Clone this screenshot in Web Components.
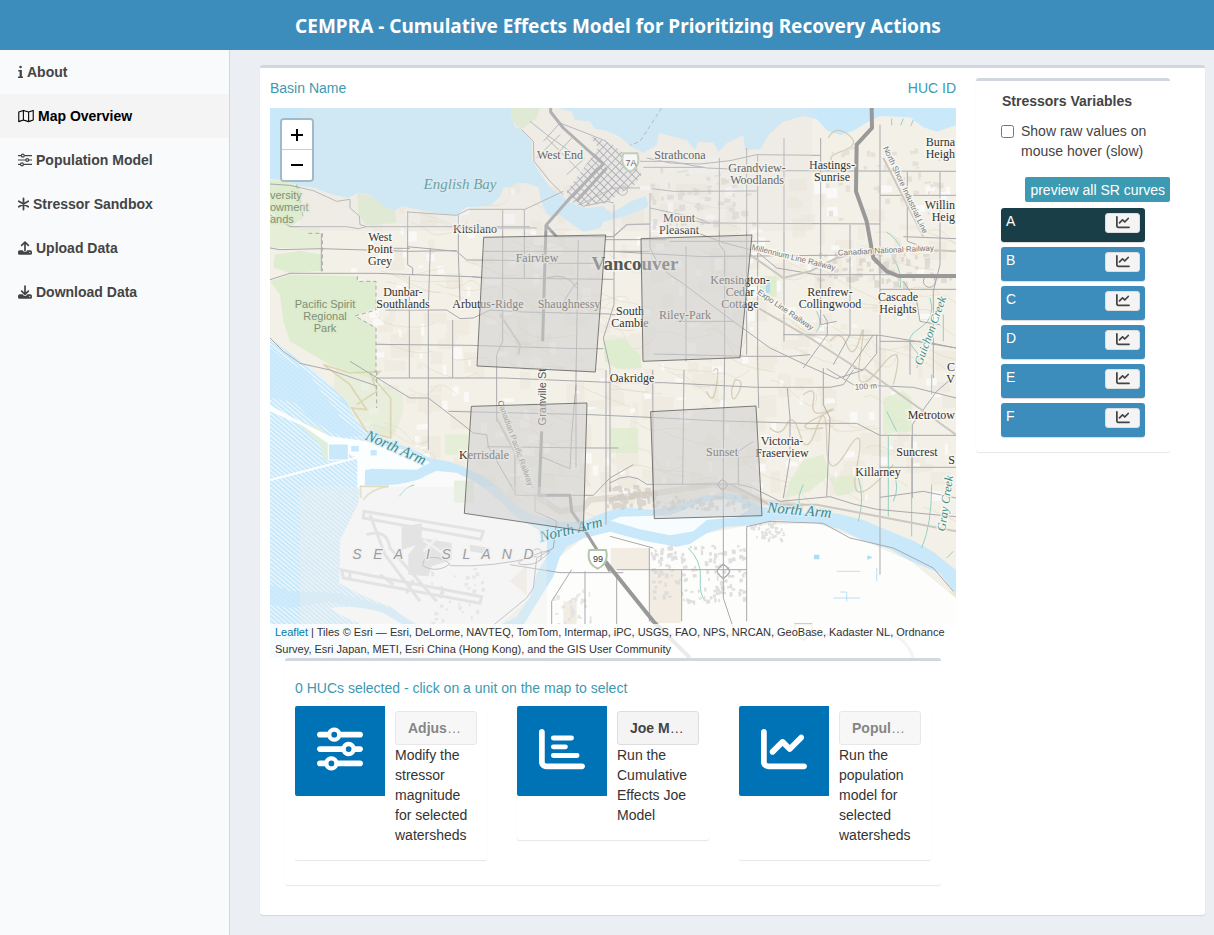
<!DOCTYPE html>
<html lang="en">
<head>
<meta charset="utf-8">
<meta name="viewport" content="width=device-width, initial-scale=1">
<title>CEMPRA</title>
<style>
  body { margin: 0; font: 14px/20px "Liberation Sans", Arial, sans-serif; color: #333; background: #ebeef3; }
</style>
</head>
<body>
<cem-app>
  <cem-nav slot="nav">
    <cem-nav-item icon="info">About</cem-nav-item>
    <cem-nav-item icon="map" active>Map Overview</cem-nav-item>
    <cem-nav-item icon="slidersThin">Population Model</cem-nav-item>
    <cem-nav-item icon="asterisk">Stressor Sandbox</cem-nav-item>
    <cem-nav-item icon="upload">Upload Data</cem-nav-item>
    <cem-nav-item icon="download">Download Data</cem-nav-item>
  </cem-nav>
  <cem-overview>
    <cem-map slot="map"></cem-map>
    <cem-actions slot="actions">
      <cem-action icon="sliders" name="Adjus" disabled>Modify the stressor magnitude for selected watersheds</cem-action>
      <cem-action icon="bars" name="Joe M">Run the Cumulative Effects Joe Model</cem-action>
      <cem-action icon="line" name="Popul" disabled>Run the population model for selected watersheds</cem-action>
    </cem-actions>
    <cem-stressors slot="side">
      <cem-stressor active>A</cem-stressor>
      <cem-stressor>B</cem-stressor>
      <cem-stressor>C</cem-stressor>
      <cem-stressor>D</cem-stressor>
      <cem-stressor>E</cem-stressor>
      <cem-stressor>F</cem-stressor>
    </cem-stressors>
  </cem-overview>
</cem-app>

<script>
const SLIDERS = 'M0 416c0 17.7 14.3 32 32 32l54.7 0c12.3 28.3 40.5 48 73.3 48s61-19.7 73.3-48L480 448c17.7 0 32-14.3 32-32s-14.3-32-32-32l-246.7 0c-12.3-28.3-40.5-48-73.3-48s-61 19.7-73.3 48L32 384c-17.7 0-32 14.3-32 32zm128 0a32 32 0 1 1 64 0 32 32 0 1 1 -64 0zM320 256a32 32 0 1 1 64 0 32 32 0 1 1 -64 0zm32-80c-32.8 0-61 19.7-73.3 48L32 224c-17.7 0-32 14.3-32 32s14.3 32 32 32l246.7 0c12.3 28.3 40.5 48 73.3 48s61-19.7 73.3-48l54.7 0c17.7 0 32-14.3 32-32s-14.3-32-32-32l-54.7 0c-12.3-28.3-40.5-48-73.3-48zM192 128a32 32 0 1 1 0-64 32 32 0 1 1 0 64zm73.3-64C253 35.7 224.8 16 192 16s-61 19.7-73.3 48L32 64C14.3 64 0 78.3 0 96s14.3 32 32 32l86.7 0c12.3 28.3 40.5 48 73.3 48s61-19.7 73.3-48L480 128c17.7 0 32-14.3 32-32s-14.3-32-32-32L265.3 64z';
const AXIS = 'M64 64c0-17.7-14.3-32-32-32S0 46.3 0 64V400c0 44.2 35.8 80 80 80H480c17.7 0 32-14.3 32-32s-14.3-32-32-32H80c-8.8 0-16-7.2-16-16V64z';
const LINE = AXIS + 'm406.6 86.6c12.5-12.5 12.5-32.8 0-45.3s-32.8-12.5-45.3 0L320 210.7l-57.4-57.4c-12.5-12.5-32.8-12.5-45.3 0l-112 112c-12.5 12.5-12.5 32.8 0 45.3s32.8 12.5 45.3 0L240 221.3l57.4 57.4c12.5 12.5 32.8 12.5 45.3 0l128-128z';
const TRAY = '<path fill-rule="evenodd" d="M64 340h110a84 84 0 0 0 164 0h110a64 64 0 0 1 64 56v48a56 56 0 0 1-56 56H56a56 56 0 0 1-56-56v-48a64 64 0 0 1 64-56zM432 398a24 24 0 1 0 .1 0z"/>';
const ICONS = {
  info: [5, '20 20 200 490', '<path d="M70 64a52 52 0 1 1 104 0 52 52 0 1 1-104 0M30 180h145v260h45v60H20v-60h65V240H30z"/>'],
  map: [16, '0 0 576 512', '<g fill="none" stroke="currentColor" stroke-width="40" stroke-linejoin="round"><path d="M24 112l168-60 192 60 168-60v350l-168 60-192-60-168 60zM192 52v350M384 112v350"/></g>'],
  slidersThin: [14, '0 0 512 512', '<g fill="none" stroke="currentColor" stroke-width="44"><path d="M0 96h120M232 96h280M0 256h280M392 256h120M0 416h90M202 416h310"/><circle cx="176" cy="96" r="52"/><circle cx="336" cy="256" r="52"/><circle cx="146" cy="416" r="52"/></g>'],
  asterisk: [11, '16 20 384 472', '<path fill="none" stroke="currentColor" stroke-width="62" stroke-linecap="round" d="M208 64v384M42 160l332 192M374 160L42 352"/>'],
  upload: [14, '0 0 512 512', TRAY + '<path fill="none" stroke="currentColor" stroke-width="62" stroke-linecap="round" stroke-linejoin="round" d="M256 350V50M134 160L256 42l122 118"/>'],
  download: [14, '0 0 512 512', TRAY + '<path fill="none" stroke="currentColor" stroke-width="62" stroke-linecap="round" stroke-linejoin="round" d="M256 40v300M134 226l122 118 122-118"/>'],
  sliders: [46, '0 0 512 512', `<path d="${SLIDERS}"/>`],
  bars: [46, '0 0 512 512', `<path d="${AXIS}"/><path fill="none" stroke="currentColor" stroke-width="54" stroke-linecap="round" d="M160 134h202M160 232h134M160 328h264"/>`],
  line: [46, '0 0 512 512', `<path d="${LINE}"/>`],
  lineSmall: [14, '0 0 512 512', `<path d="${LINE}"/>`]
};
const icon = name => {
  const [w, box, body] = ICONS[name];
  return `<svg class="icon" width="${w}" height="${w > 20 ? w : 14}" viewBox="${box}" fill="currentColor" aria-hidden="true">${body}</svg>`;
};
const define = (name, markup) => customElements.define(name, class extends HTMLElement {
  constructor() {
    super();
    this.attachShadow({ mode: 'open' });
  }
  connectedCallback() {
    this.shadowRoot.innerHTML = typeof markup === 'function' ? markup(this) : markup;
  }
});

define('cem-app', `
<style>
  :host { display: grid; grid-template: 50px 1fr / 230px minmax(0, 1fr); min-height: 100vh; }
  header { grid-column: 1 / -1; background: #3c8dbc; color: #fff; display: flex; align-items: center; justify-content: center; }
  h1 { margin: 0; padding: 2px 0 0 22px; font: bold 19px/28px "Noto Sans", "Open Sans", sans-serif; }
  main { padding: 15px 9px 20px 30px; }
</style>
<header><h1>CEMPRA - Cumulative Effects Model for Prioritizing Recovery Actions</h1></header>
<slot name="nav"></slot>
<main><slot></slot></main>`);

define('cem-nav', `
<style>
  :host { display: block; background: #f9fafc; border-right: 1px solid #d2d6de; }
</style>
<nav><slot></slot></nav>`);

define('cem-nav-item', el => `
<style>
  :host { display: block; }
  a { display: flex; align-items: center; gap: 4px; padding: 12px 18px; color: #444; font-weight: bold; text-decoration: none; }
  :host([active]) a { background: #f4f4f5; color: #000; }
  .icon { flex: none; }
</style>
<a href="#">${icon(el.getAttribute('icon'))}<span><slot></slot></span></a>`);

define('cem-overview', `
<style>
  :host { display: grid; grid-template-columns: minmax(0, 1fr) 194px; gap: 20px; align-items: start; background: #fff;
    border-top: 3px solid #d2d6de; border-radius: 3px; box-shadow: 0 1px 1px rgba(0,0,0,.1); padding: 10px 35px 30px 10px; }
  .head { display: flex; justify-content: space-between; color: #3c9ab2; margin-bottom: 10px; }
</style>
<section>
  <div class="head"><span>Basin Name</span><span>HUC ID</span></div>
  <slot name="map"></slot>
  <slot name="actions"></slot>
</section>
<slot name="side"></slot>`);

define('cem-actions', `
<style>
  :host { display: block; margin: 0 15px; border-top: 3px solid #d2d6de; border-radius: 3px; box-shadow: 0 1px 1px rgba(0,0,0,.1); padding: 17px 10px 25px; background: #fff; }
  p { margin: 0 0 8px; color: #3c9ab2; }
  .row { display: grid; grid-template-columns: repeat(3, minmax(0, 1fr)); gap: 30px; align-items: start; }
</style>
<p>0 HUCs selected - click on a unit on the map to select</p>
<div class="row"><slot></slot></div>`);

define('cem-action', el => `
<style>
  :host { display: flex; border-radius: 2px; box-shadow: 0 1px 1px rgba(0,0,0,.1); background: #fff; }
  .tile { flex: none; width: 90px; height: 90px; background: #0073b7; color: #fff; border-radius: 2px 0 0 2px; display: flex; align-items: center; justify-content: center; padding-bottom: 4px; box-sizing: border-box; }
  .body { flex: 1; min-width: 0; padding: 5px 10px; }
  button { display: block; box-sizing: border-box; width: 100%; height: 34px; max-width: 82px; padding: 0 12px; text-align: left; font: inherit; color: #444; background: #f4f4f4; border: 1px solid #ddd; border-radius: 3px; white-space: nowrap; }
  button[disabled] { opacity: .65; }
  p { margin: 0 0 10px; }
</style>
<div class="tile">${icon(el.getAttribute('icon'))}</div>
<div class="body">
  <button type="button" ${el.hasAttribute('disabled') ? 'disabled' : ''}><b>${el.getAttribute('name')}</b>…</button>
  <p><slot></slot></p>
</div>`);

define('cem-stressors', `
<style>
  :host { display: block; border-top: 3px solid #d2d6de; border-radius: 3px; box-shadow: 0 1px 1px rgba(0,0,0,.1); padding: 10px 0 15px 25px; }
  h2 { margin: 0 0 10px; font: bold 14px/20px "Liberation Sans", Arial, sans-serif; padding-left: 1px; color: #444; }
  label { display: flex; gap: 7px; align-items: flex-start; color: #444; }
  input { margin: 4px 0 0; width: 13px; height: 13px; flex: none; }
  .preview { display: block; margin: 16px 0 6px auto; padding: 0 5px; height: 25px; border: 0; border-radius: 2px; background: #3c9ab2; color: #fff; font: inherit; white-space: nowrap; }
  .list { display: grid; gap: 5px; margin-right: 25px; }
</style>
<h2>Stressors Variables</h2>
<label><input type="checkbox"><span>Show raw values on mouse hover (slow)</span></label>
<button class="preview" type="button">preview all SR curves</button>
<div class="list"><slot></slot></div>`);

define('cem-stressor', `
<style>
  :host { display: flex; justify-content: space-between; align-items: flex-start; box-sizing: border-box; height: 34px; padding: 5px; background: #3c8dbc; color: #fff; border-radius: 3px; box-shadow: 0 1px 1px rgba(0,0,0,.15); }
  :host([active]) { background: #193e47; }
  span { line-height: 16px; }
  button { display: flex; justify-content: center; width: 35px; height: 20px; padding: 1px 0 0; border: 1px solid #ddd; border-radius: 3px; background: #f4f4f4; color: #444; box-sizing: border-box; }
</style>
<span><slot></slot></span><button type="button" aria-label="Plot">${icon('lineSmall')}</button>`);

/* ---- Map artwork. Geometry is drawn at three units per pixel. ---- */
const seeded = s => () => (s = (s * 16807) % 2147483647) / 2147483647;
const rnd = seeded(77);
const scatter = (n, x, y, w, h, min, max, fill, op) => {
  let d = '';
  for (let i = 0; i < n; i++) {
    const a = Math.round(x + rnd() * w), b = Math.round(y + rnd() * h), c = Math.round(min + rnd() * (max - min)), e = Math.round(min + rnd() * (max - min));
    d += `M${a} ${b}l${c} ${Math.round(rnd() * 6 - 3)} 1 ${e} -${c} 2z`;
  }
  return `<path d="${d}" fill="${fill}" opacity="${op}"/>`;
};
const squiggles = (n, x, y, w, h) => {
  let d = '';
  for (let i = 0; i < n; i++) {
    d += `M${Math.round(x + rnd() * w)} ${Math.round(y + rnd() * h)}q${Math.round(rnd() * 60)} ${Math.round(rnd() * 60 - 20)} ${Math.round(60 + rnd() * 30)} ${Math.round(rnd() * 50)}t${Math.round(40 + rnd() * 60)} ${Math.round(rnd() * 60 - 20)}`;
  }
  return `<path d="${d}" fill="none" stroke="#ddd3bd" stroke-width="2" opacity=".7"/>`;
};
const label = (x, y, lines, cls = '') => lines.map((t, i) => `<text class="${cls}" x="${x}" y="${y + i * 12}">${t}</text>`).join('');

const water = `
<g transform="translate(0 -24)">
  <path d="M0 24H725L722 45 735 80 760 95 785 125 786 180 810 220 840 262 872 285 905 310 950 325 1000 318 1020 340 1050 325 1080 305 1128 288 1135 320 1060 350 1000 365 990 385 940 395 900 368 870 345 845 352 828 338 812 300 806 262 770 250 742 248 720 262 700 262 690 290 660 318 590 322 560 346 520 342 440 328 395 318 375 332 340 318 300 285 262 278 235 294 190 284 130 262 90 258 45 242 0 236z"/>
  <path d="M865 24L905 35 915 60 960 64 975 86 1010 92 1050 110 1085 140 1120 158 1160 135 1168 98 1210 110 1250 120 1275 150 1285 125 1330 128 1345 155 1370 130 1420 105 1425 150 1470 148 1500 100 1540 65 1600 48 1640 58 1672 92 1712 105 1750 92 1790 68 1830 48 1920 52 1960 82 2000 95 2058 76V24z"/>
</g>
<g transform="translate(0 786)">
  <path d="M0-95L60-50 130 0 180 45 230 95 245 130 285 180 350 210 420 235 480 265 540 275 580 290 640 318 690 355 735 405 780 432 860 455 940 455 1000 428 1060 412 1150 420 1220 405 1300 378 1370 370 1415 375 1470 408 1560 430 1700 430 1780 450 1850 480 1930 512 1990 545 2058 600V672L2010 610 1920 572 1860 538 1780 512 1710 478 1640 460 1520 450 1440 466 1370 470 1310 490 1260 522 1220 530 1120 512 1020 485 940 505 890 530 870 560 850 620 800 700 760 765H690L740 740 780 680 800 610 830 560 832 495 780 465 730 435 690 392 650 360 610 332 560 308 500 302 440 330 340 345 285 330 270 350 265 400 210 510 208 640 280 680 360 710 440 765V864H0z"/>
</g>`;

const geometry = `
<rect width="2058" height="1650" fill="#f3f0e7"/>
${scatter(230, 300, 210, 1720, 950, 12, 70, '#ece6d9', '.5')}
${scatter(210, 200, 220, 1830, 950, 6, 36, '#fbfaf8', '.9')}
${squiggles(120, 280, 230, 1700, 1000)}
<g fill="#deeccf">
  <path d="M0 216L45 220 90 236 100 330 60 356 0 310z"/>
  <path d="M0 330L60 356H150V420H0z" opacity=".6"/>
  <path d="M15 440L90 428 154 440V488L60 496 10 478z"/>
  <path d="M0 520L60 500 262 505 262 520 318 520V600L255 624 318 658 318 790 300 810 180 770 60 700 40 640 30 560z"/>
  <path d="M262 256L300 264 375 308 380 345 290 352 265 320zM725 0H810L800 30 750 68 722 30z"/>
  <path d="M1000 700L1060 690 1110 740 1115 780 1040 782 1005 760zM1470 505h50v60l-50 10z"/>
  <path d="M1840 870L1900 850 1925 870V970L1840 978zM1560 1120L1600 1055 1660 1040 1680 1100 1620 1150 1545 1170zM1680 1110L1750 1100 1765 1150 1700 1165zM1020 960h85v75h-85z" opacity=".8"/>
  <path d="M525 980h70v60h-70z" opacity=".7"/>
  <path d="M1240 1480h95v42h-95zM1020 1590h60v60h-60zM1130 1600h70v50h-70zM2020 1450h38v55z" opacity=".8"/>
  <path d="M200 770L300 800 400 860 400 910 370 990 290 960 240 900 190 840z" opacity=".5"/>
</g>
<path d="M0 1250L90 1180 270 1136 290 1120 500 1090 560 1094 650 1146 730 1221 830 1280 830 1346 780 1470 690 1551 440 1551 360 1496 208 1430z" fill="#fafafa"/>
<path d="M552 1118h60v66h-60z" fill="#e6f0dd"/>
<path d="M870 1346L940 1290 1020 1270 1220 1316 1310 1276 1440 1252 1640 1246 1780 1298 1920 1358 2058 1470V1650H700L800 1486z" fill="#fdfdfc"/>
<path d="M1022 1320L1138 1320V1384H1022zM1138 1385h95v160h-95zM880 1480h40v70h-40zM720 1420l50-50v90z" fill="#f2ece3"/>
<g fill="#c9e9fb">${water}</g>
<path d="M0 691L60 736 130 786 180 831 245 916 285 966 350 996 290 1030 270 1136 265 1186 210 1296 208 1426 280 1466 360 1496 440 1551V1650H0z" fill="url(#hatch)"/>
<path d="M0 720L50 760 110 790 160 860 210 920 130 910 60 880 0 870zM70 880l130 40 80 60-60 10-90-50z" fill="#c9e9fb" opacity=".8"/>
<path d="M0 1430L60 1450 200 1455 280 1476 360 1500 440 1551 400 1551 300 1510 180 1480 60 1500 0 1490z" fill="#c9e9fb" opacity=".8"/>
<path d="M70 940L140 955 185 990 180 1050 160 1060 150 1010 110 970z" fill="#e0efd6" opacity=".8"/>
<g fill="#fff">
  <path d="M0 892L60 925 180 985 290 1000 420 1030 480 1064 440 1085 300 1082 272 1150 262 1140 262 1050 180 1010 100 955 0 910z" opacity=".92"/>
</g>
<path d="M0 1116L265 1048" stroke="#fff" stroke-width="6"/>
<g fill="#fff">
  <path d="M1050 1226L1200 1222 1290 1186 1360 1172 1420 1186 1436 1206 1400 1228 1310 1236 1270 1270 1200 1282 1110 1264 1022 1238z" opacity=".85"/>
</g>
<path d="M175 1008h60v48h-60zM242 1012h26v20h-26zM300 1024h22v20h-22z" fill="#c9e9fb" stroke="#fff" stroke-width="3"/>
<path d="M285 1086q60-10 90 10l90 10q-40 20-120 26l-60 0z" fill="#c9e9fb"/>
<path d="M180 1500q80-10 160 15l60 36H280q-60-20-100-50z" fill="#fbfcf8"/>
<g fill="none" stroke="#d6d1a8" stroke-width="5" opacity=".8">
  <path d="M160 770L240 830 290 905 245 900 290 970 362 990V870L310 810 330 790 240 795zM300 790l20 60-60 40M272 1170v-35h85q-50 5-78 40"/>
  <path stroke="#cfc6ac" stroke-width="4" d="M1600 860q40-30 30 20t40 30-30 20 20 30M1500 960q30 30 50-10t40 30 50-20 30 40 60 30 30 50 110-10M1680 700q30-40 50 10t40-20 0 60 60 30 40 50M1330 790q20-30 10 40t-30 20M1395 815q30 0 10 40t-20-10zM1675 90q20-40 60-10t-20 50-10 40"/>
</g>
<g fill="none" stroke="#93d0c2" stroke-width="3">
  <path d="M1850 372q30 20 50 60M1870 450q30 50 20 90M1640 610q20 40 0 60M1940 780q20-30-10-60t20-60 30-90M2020 620v80M1985 800v60M1855 985v240M1925 985v300M1985 1130q0 120-30 190M1765 1110q20 60 0 130M1600 1130q-20 40-10 60M2050 1330l-20 20M1870 1090q20 50 0 90M1255 1320q40 40 36 90t16 70M388 1165q20-30 45-34M1850 910l30 60M1865 32v20M1900 32l-8 20M1930 36l-8 18"/>
</g>
<g fill="none" stroke="#9ad5f3" stroke-width="2"><path d="M1700 1390h70M1820 1380v40M1690 1470h80M1730 1480v-28h-20"/></g>
<path d="M1632 1340h16v14h-16zM1792 1342l16 6-16 8zM1486 520l14-12v46h-12z" fill="#aaddf6"/>
${scatter(130, 1140, 1310, 280, 170, 5, 13, '#dcdcdc', '.9')}
${scatter(60, 1010, 1130, 140, 60, 6, 18, '#cfcac4', '.7')}
${scatter(50, 1150, 1160, 300, 40, 4, 14, '#cfcac4', '.7')}
${scatter(40, 1440, 1240, 100, 50, 4, 10, '#dedede', '.9')}
${scatter(35, 840, 1440, 120, 120, 4, 12, '#e2e2e2', '.9')}
${scatter(30, 480, 1380, 160, 170, 4, 12, '#dedede', '.9')}
${scatter(60, 1120, 170, 330, 190, 5, 20, '#d9d6d2', '.8')}
${scatter(25, 1150, 130, 200, 50, 10, 30, '#f4f3f1', '.9')}
${scatter(60, 1640, 430, 400, 90, 5, 20, '#d5d1cb', '.7')}
${scatter(40, 1660, 110, 360, 220, 5, 20, '#e2ddd3', '.8')}
<path d="M800 1165L870 1210 940 1200 960 1175 1130 1160 1330 1128 1400 1146 1480 1182 1600 1195" fill="none" stroke="#cbc2b6" stroke-width="18" opacity=".4"/>
<g fill="none" stroke="#dcdcdc" stroke-width="9">
  <path d="M282 1210L640 1270 632 1294 280 1230zM300 1220L345 1340 450 1480M290 1280q60-20 70 40l140 160M215 1386l420 80-5 20-410-76zM240 1386v30M330 1400l40 30M430 1416l-20 40M520 1440l-10 30"/>
</g>
<path d="M395 1256l60-10v60l-60 20zM455 1290l90 15v50l-60 20-10 30-60-5v-60zM600 1310l60 10v20l-60-10z" fill="#dcdcdc"/>
<path d="M460 1296l60 40M500 1290l-40 40" stroke="#f4f4f4" stroke-width="8"/>
<g clip-path="url(#town)"><rect x="870" y="40" width="290" height="270" fill="#eae9e7"/><rect x="870" y="40" width="290" height="270" fill="url(#grid)"/></g>
<g fill="none" stroke="#a9a9ae" stroke-width="3">
  <path d="M0 228L60 232 130 248 200 280 240 274V300L268 324 270 350 290 356H780M0 320L60 356H230L265 362 290 356M0 420L30 425 155 422 420 430 560 428M370 421H420M154 376V490M0 515L60 496 320 496 600 506 640 508M346 606H530L570 632 610 630 660 606 760 612 1020 618"/>
  <path d="M412 312L560 322 595 304H765L880 250M413 310V470L428 480V500M481 420L475 600V1026M565 322V440L570 580M565 360H800M412 416L560 430 590 456 840 458M418 505V810M548 636V810M318 709L600 712 920 722 1000 722"/>
  <path d="M698 304V700L680 740V940M763 304V510M925 396L918 810V1080M870 600q60-100 50-70M830 510q60-20 90 30M605 506L640 510 1030 514M640 430H1140M835 466L1040 466M1005 395H1190"/>
  <path d="M1032 290V590L1000 690 1020 780 1020 930V1150M1140 255V420Q1170 490 1230 520L1390 640 1500 720 1610 772 1700 812 1780 786 1820 736V680M1248 415V760M1348 150V410L1364 430V740L1360 1060M1430 120V300 740M1463 140V760L1466 900M1542 90V700M1652 90V420 650L1700 640M1740 350V680M1830 50V1400"/>
  <path d="M1130 150L1200 165 1290 168 1380 158 1460 140 1650 142M1110 160H1200L1310 180 1500 188 2058 190M1120 178H1300M1145 242L1210 250 1460 249M1200 320L1300 345 1830 348M1140 300L1280 330 1320 346M1270 370L1360 404 1460 430M1020 430L1300 446 1830 440M1200 400H1500M1460 430L1520 480 1640 500H2058M1020 620H1110M1540 680L1830 682 2058 720M1220 640H1390M1150 738L1440 745H1560L1620 740"/>
  <path d="M1830 262H2058M1912 192V400L2000 430M2010 192V470L1990 550V810M1830 544H2058M1830 700H1960L2058 720M1920 700V800M1660 620L1672 640V680L1600 780M1740 680L1690 770M1810 680L1720 810M1900 386L2058 392M1900 520L1940 580 1950 640 2010 650"/>
  <path d="M240 760L420 870 475 870 560 935 610 975 650 980 655 1016 740 1162H970L1020 1110 1090 1070M320 810L700 810 1040 824H1180L1460 838H1680L1720 830 1750 786M535 910L960 920 1180 930 1330 938 1600 946H1760L1830 982H2058M650 1016L960 1020H1045M900 1082L905 980 918 830M815 1047L900 1082M735 1040V1162M795 1160V1210L860 1240"/>
  <path d="M1020 1125q60-40 110 4L1400 1128 1450 1140 1530 1180 1680 1166 1750 1188 1820 1204 2058 1226M1148 786L1150 1180M1242 786L1238 1128M1360 900V1128 1470L1390 1560M1405 1128V1030L1450 1000M1552 840L1560 930 1560 1050 1540 1170M1660 780V890L1680 930 1670 1166M1750 780L1780 786M1670 782L1750 830 1930 838 2058 870M1927 1170V950L2000 850 2058 800M1830 1078H2058M1830 1168L1960 1150 2058 1170"/>
  <path d="M1430 1256V1540M1430 1256L1500 1240 1660 1246 1740 1290 1870 1320 1990 1380 2050 1450M1040 1385H1430M1138 1320V1540M1235 1385V1540M720 1370L870 1394H1060M860 1240L850 1320 800 1350 790 1440 770 1470 660 1560 640 1640M945 1390V1550M845 1550V1480L905 1385M540 1373q130 6 260-28M1040 1400V1550M1020 1285L1150 1320M1008 786V1250M0 690L40 730 90 766 180 786 320 834"/>
  <circle cx="1360" cy="1390" r="18"/><circle cx="1358" cy="1130" r="13"/><path d="M1340 1390l20-24 20 24-20 24zM1342 1130l16-18 16 18-16 18z"/>
  <path d="M460 1366q0-20 30-18t50 20q-30 22-60 14t-20-16zM785 1330q30-20 30 10t-50 30 30-30 10 20"/><circle cx="1058" cy="248" r="14"/><circle cx="1978" cy="520" r="18"/>
  <path d="M780 40L830 80 900 130 940 150M755 65L790 100 792 160 840 220 880 260M820 100L870 45M850 150L910 85M890 200L945 150M800 150L870 80M870 45L960 80 1010 100M830 90L930 190M940 295L1010 280 1032 285M930 290L1030 240 1110 240"/>
</g>
<g fill="none" stroke="#cbc7c1" stroke-width="6">
  <path d="M1840 150L1960 385M1440 440L1540 510 1620 490 1700 450 1830 420 2058 430M1465 600L1620 690 1760 780M1780 780L2058 980M680 930L790 1140M690 620L750 710 745 740M1380 1128L1500 1190 1640 1190 1800 1220 2058 1270"/>
</g>
<g fill="none" stroke="#aaa" stroke-width="3" stroke-dasharray="12 9"><path d="M115 376H157V490M262 505V520H318V606L255 624 318 660V790L300 800M1175 0L1110 100 1080 112M80 230L100 330M320 790V900"/></g>
<g fill="none" stroke="#9f9fa1" stroke-width="9" stroke-linejoin="round">
  <path d="M842 0V12L880 60 1000 168 900 270 828 352 818 700M815 970L807 1162H900L905 1210 940 1260 990 1340 1020 1390M905 268L985 180M920 280L1010 180M828 352L860 386"/>
  <path stroke="#999" stroke-width="12" d="M1805 0L1806 60 1760 110 1758 250 1790 340 1810 450 1850 490 1885 504H2058M990 1340L1150 1540 1260 1650"/>
</g>
<path d="M860 386L1030 386 1070 350 1140 348" fill="none" stroke="#aaa" stroke-width="4"/>
<g fill="none" stroke="#c9c9cb" stroke-width="9"><path d="M1010 1580H1860Q1910 1590 1930 1650"/></g>
<path d="M1575 1548h50q8 30-25 48-33-18-25-48z" fill="#fff" stroke="#b9c4a6" stroke-width="5"/>
<g fill="#fff" stroke="#b5c7a9" stroke-width="6"><path d="M1060 136h42q12 40-21 55-33-15-21-55zM958 1326h50q10 40-25 56-35-16-25-56z"/></g>`;

define('cem-map', `
<style>
  :host { display: block; position: relative; height: 550px; overflow: hidden; background: #ddd; }
  .art { display: block; width: 100%; height: 100%; }
  text { font: 12px "Liberation Serif", serif; fill: #333; text-anchor: middle; paint-order: stroke; stroke: #faf8f2; stroke-width: 3px; stroke-opacity: .8; stroke-linejoin: round; white-space: pre; }
  .park, .rail, .street, .sign, .isle, .contour { font-family: "Liberation Sans", Arial, sans-serif; font-size: 11px; }
  .park { fill: #7f8f76; stroke: #dcebcb; }
  text.start { text-anchor: start; }
  text.end { text-anchor: end; }
  .rail, .contour { font-size: 8px; fill: #777; }
  .street { fill: #555; }
  .sign { font-size: 9px; stroke: none; }
  .isle { font-size: 14px; font-style: italic; fill: #666; stroke: #f5f5f5; }
  .water { font-size: 15px; font-style: italic; fill: #3f8a8a; stroke: #d6edf8; }
  .creek { font-size: 12px; font-style: italic; fill: #3f8f87; }
  .city { font-size: 19px; font-weight: bold; fill: #555; }
  .zoom { position: absolute; left: 10px; top: 10px; border: 2px solid rgba(0,0,0,.2); border-radius: 4px; background-clip: padding-box; }
  .zoom button { display: flex; align-items: center; justify-content: center; box-sizing: border-box; width: 30px; height: 30px; padding: 0; border: 0; background: #fff; color: #000; border-radius: 0 0 2px 2px; }
  .zoom button:first-child { border-radius: 2px 2px 0 0; border-bottom: 1px solid #ccc; }
  .credit { position: absolute; left: 0; right: 0; bottom: 0; box-sizing: border-box; padding: 0 5px; background: rgba(255,255,255,.8); color: #333; font-size: 11px; line-height: 17px; }
  .credit a { color: #0078a8; text-decoration: none; }
</style>
<svg class="art" viewBox="0 0 686 550" preserveAspectRatio="xMidYMid slice" role="img" aria-label="Map of Vancouver">
  <defs>
    <pattern id="hatch" width="10" height="10" patternUnits="userSpaceOnUse" patternTransform="rotate(40)"><rect width="10" height="3" fill="#fff" opacity=".8"/></pattern>
    <pattern id="grid" width="17" height="17" patternUnits="userSpaceOnUse" patternTransform="rotate(44)"><path d="M0 0H17M0 0V17" stroke="#9c9c9f" stroke-width="5"/></pattern>
    <clipPath id="town"><path d="M890 250L985 120 960 85 1020 105 1080 150 1115 200 1090 235 1050 255 1010 285 930 295 895 275z"/></clipPath>
  </defs>
  <g transform="scale(.33333)">${geometry}</g>
  <g>
    ${label(290, 51, ['West End'])}${label(410, 51, ['Strathcona'])}
    ${label(487, 64, ['Grandview-', 'Woodlands'])}${label(562, 61, ['Hastings-', 'Sunrise'])}
    ${label(685, 38, ['Burna', 'Heigh'], 'end')}${label(685, 101, ['Willin', 'Heig'], 'end')}
    ${label(205, 125, ['Kitsilano'])}${label(409, 114, ['Mount', 'Pleasant'])}
    ${label(110, 133, ['West', 'Point', 'Grey'])}${label(267, 154, ['Fairview'])}
    ${label(133, 188, ['Dunbar-', 'Southlands'])}${label(218, 200, ['Arbutus-Ridge'])}${label(299, 200, ['Shaughnessy'])}
    ${label(470, 176, ['Kensington-', 'Cedar', 'Cottage'])}${label(415, 211, ['Riley-Park'])}
    ${label(360, 207, ['South', 'Cambie'])}${label(560, 188, ['Renfrew-', 'Collingwood'])}
    ${label(628, 193, ['Cascade', 'Heights'])}${label(362, 274, ['Oakridge'])}
    ${label(214, 351, ['Kerrisdale'])}${label(452, 348, ['Sunset'])}
    ${label(512, 337, ['Victoria-', 'Fraserview'])}${label(685, 311, ['Metrotow'], 'end')}
    ${label(647, 348, ['Suncrest'])}${label(608, 368, ['Killarney'])}
    ${label(685, 263, ['C', 'V'], 'end')}${label(685, 356, ['S'], 'end')}
    ${label(365, 162, ['Vancouver'], 'city')}
    ${label(190, 81, ['English Bay'], 'water')}
    ${label(0, 91, ['versity', 'owment', 'ands'], 'park start')}
    ${label(55, 200, ['Pacific Spirit', 'Regional', 'Park'], 'park')}
    <text class="isle" x="173" y="451">S   E   A      I   S   L   A   N   D</text>
    <text class="water" transform="translate(124 344) rotate(24)">North Arm</text>
    <text class="water" transform="translate(302 426) rotate(-14)">North Arm</text>
    <text class="water" transform="translate(529 407) rotate(5)">North Arm</text>
    <text class="creek" transform="translate(664 224) rotate(-70)">Guichon Creek</text>
    <text class="creek" transform="translate(679 396) rotate(-82)">Gray Creek</text>
    <text class="street" transform="translate(276 289) rotate(-90)">Granville St</text>
    <text class="rail" transform="translate(243 336) rotate(70)">Canadian Pacific Railway</text>
    <text class="rail" transform="translate(633 83) rotate(65)">North Shore Industrial Line</text>
    <text class="rail" transform="translate(523 152) rotate(14)">Millennium Line Railway</text>
    <text class="rail" transform="translate(616 145) rotate(-3)">Canadian National Railway</text>
    <text class="rail" transform="translate(514 204) rotate(34)">Expo Line Railway</text>
    <text class="contour" transform="translate(596 281) rotate(-4)">100 m</text>
    <text class="sign" x="361" y="58">7A</text>
    <text class="sign" x="328" y="454">99</text>
  </g>
  <g transform="scale(.33333)">
    <path d="M90 0H1625V369H90z" fill="#e2e4e4" opacity=".28"/>
    <path d="M90 1136H830V1650H90z" fill="#eee" opacity=".4"/>
    <g fill="#cfcfcf" fill-opacity=".54" stroke="#555" stroke-opacity=".75" stroke-width="3">
      <path d="M641 388L1007 381 976 792 621 774zM1113 392L1446 381 1410 749 1119 760zM604 895L951 885 940 1269 583 1216zM1142 911L1458 894 1476 1223 1153 1232z"/>
    </g>
  </g>
</svg>
<div class="zoom">
  <button type="button" aria-label="Zoom in"><svg width="12" height="12"><path d="M6 0V12M0 6H12" stroke="#000" stroke-width="2"/></svg></button>
  <button type="button" aria-label="Zoom out"><svg width="12" height="12"><path d="M0 6H12" stroke="#000" stroke-width="2"/></svg></button>
</div>
<div class="credit"><a href="#">Leaflet</a> | Tiles © Esri — Esri, DeLorme, NAVTEQ, TomTom, Intermap, iPC, USGS, FAO, NPS, NRCAN, GeoBase, Kadaster NL, Ordnance Survey, Esri Japan, METI, Esri China (Hong Kong), and the GIS User Community</div>`);
</script>
</body>
</html>
